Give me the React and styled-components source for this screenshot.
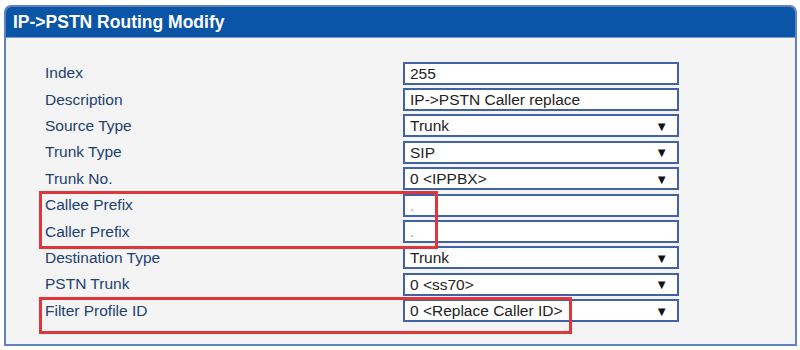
import React from "react";
import styled, { createGlobalStyle } from "styled-components";

const GlobalStyle = createGlobalStyle`
  body {
    margin: 0;
    background: #ffffff;
    font-family: "Liberation Sans", Arial, sans-serif;
  }
`;

const Panel = styled.div`
  margin: 5px 3px 0 4px;
  width: 793px;
  height: 341px;
  box-sizing: border-box;
  border: 2px solid #5f82c2;
  border-radius: 7px 7px 0 0;
  background: #f4f4f4;
  overflow: hidden;
`;

const Header = styled.div`
  height: 30px;
  background: #0b55a6;
  color: #fff;
  font-weight: bold;
  font-size: 17.5px;
  display: flex;
  align-items: center;
  padding-left: 7px;
  border-bottom: 1px solid #7b9bd0;
`;

const Form = styled.div`
  position: relative;
  display: flex;
  flex-direction: column;
  padding: 22px 0 0 39px;
`;

const Row = styled.div`
  display: grid;
  grid-template-columns: 358px 276px;
  align-items: center;
  height: 26.4px;
`;

const Label = styled.span`
  font-size: 15.5px;
  color: #22416f;
`;

const Field = styled.div`
  height: 23px;
  box-sizing: border-box;
  border: 2px solid #4262a8;
  background: #fff;
  display: flex;
  align-items: center;
  justify-content: space-between;
  padding: 1px 9px 0 5px;
  font-size: 15.5px;
  color: ${(p) => (p.$faint ? "#999" : "#222")};
`;

const Arrow = styled.span`
  font-size: 13px;
  color: #111;
`;

const Highlight = styled.div`
  position: absolute;
  border: 3px solid #e0353b;
  pointer-events: none;
`;

const rows = [
  { label: "Index", value: "255" },
  { label: "Description", value: "IP->PSTN Caller replace" },
  { label: "Source Type", value: "Trunk", select: true },
  { label: "Trunk Type", value: "SIP", select: true },
  { label: "Trunk No.", value: "0 <IPPBX>", select: true },
  { label: "Callee Prefix", value: ".", faint: true },
  { label: "Caller Prefix", value: ".", faint: true },
  { label: "Destination Type", value: "Trunk", select: true },
  { label: "PSTN Trunk", value: "0 <ss70>", select: true },
  { label: "Filter Profile ID", value: "0 <Replace Caller ID>", select: true },
];

export default function App() {
  return (
    <>
      <GlobalStyle />
      <Panel>
        <Header>IP-&gt;PSTN Routing Modify</Header>
        <Form>
          {rows.map((r) => (
            <Row key={r.label}>
              <Label>{r.label}</Label>
              <Field $faint={r.faint}>
                <span>{r.value}</span>
                {r.select && <Arrow>▼</Arrow>}
              </Field>
            </Row>
          ))}
          <Highlight style={{ left: 33, top: 153, width: 393, height: 52 }} />
          <Highlight style={{ left: 33, top: 259, width: 527, height: 31 }} />
        </Form>
      </Panel>
    </>
  );
}
